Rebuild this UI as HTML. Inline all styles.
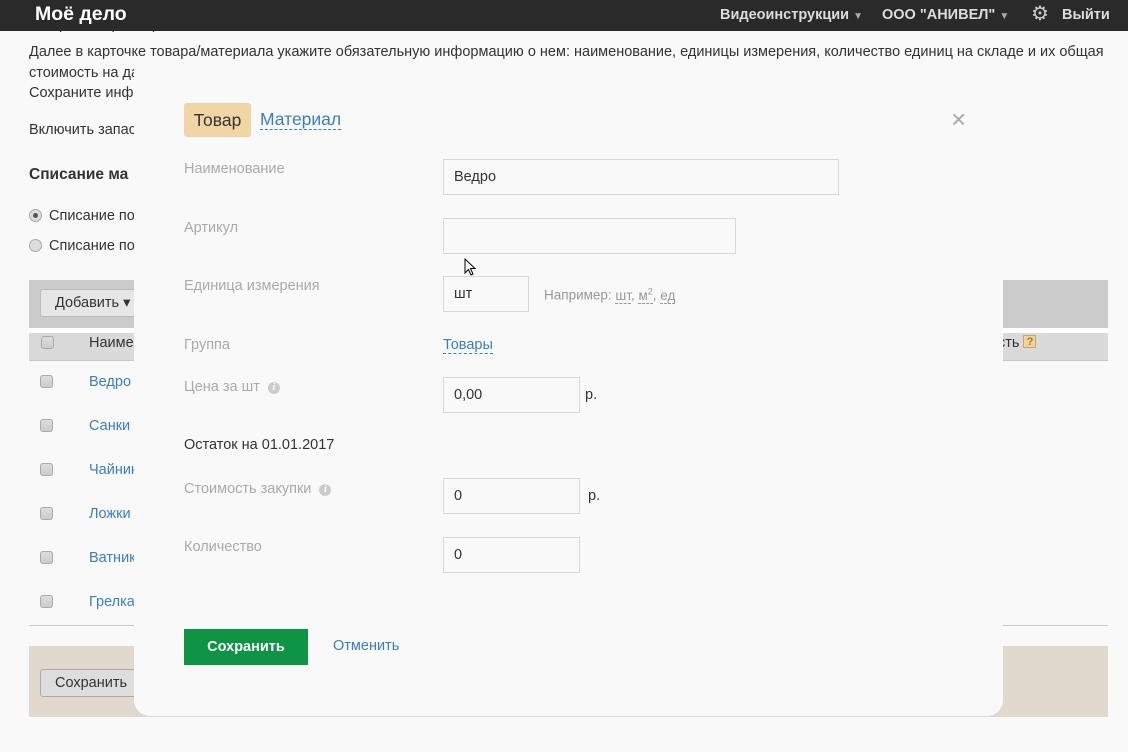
<!DOCTYPE html>
<html><head><meta charset="utf-8"><style>
*{margin:0;padding:0;box-sizing:border-box}
body{width:1128px;height:752px;overflow:hidden;background:#f9f9f9;font-family:"Liberation Sans",Arial,sans-serif;font-size:14.5px;color:#333;position:relative}
.a{position:absolute;white-space:nowrap}
.top{position:absolute;left:0;top:0;width:1128px;height:31px;background:#2a2a2a;z-index:5}
.top .r{color:#ddd;font-weight:bold;font-size:14.5px}
.lnk{color:#3a7ec2}
.cb{position:absolute;width:13px;height:13px;border:1px solid #aaa;border-radius:3px;background:linear-gradient(#ddd,#ccc)}
.lbl{position:absolute;color:#aaa;font-size:14.5px}
.inp{position:absolute;border:1px solid #d8d8d8;background:#f9f9f9;height:36px;padding-left:10px;line-height:34px;color:#333}
.dash{border-bottom:1px dashed #3a7ec2}
.info{display:inline-block;width:12px;height:12px;border-radius:50%;background:#ccc;color:#fff;font-size:10px;font-weight:bold;text-align:center;line-height:12px;font-style:italic;font-family:"Liberation Serif",serif;vertical-align:1px;margin-left:8px}
</style></head><body>
<div class="top">
<div class="a" style="left:35px;top:3px;color:#fff;font-weight:bold;font-size:19.5px">Моё дело</div>
<div class="a r" style="left:720px;top:7px">Видеоинструкции <span style="font-size:10px;color:#aaa">▼</span></div>
<div class="a r" style="left:882px;top:7px">ООО "АНИВЕЛ" <span style="font-size:10px;color:#aaa">▼</span></div>
<div class="a" style="left:1031px;top:4px;color:#ccc;font-size:20px;line-height:20px">⚙</div>
<div class="a r" style="left:1062px;top:7px">Выйти</div>
</div>
<div class="a" style="left:29px;top:17px">товара/материала).</div>
<div class="a" style="left:29px;top:44px">Далее в карточке товара/материала укажите обязательную информацию о нем: наименование, единицы измерения, количество единиц на складе и их общая</div>
<div class="a" style="left:29px;top:65px">стоимость на дат</div>
<div class="a" style="left:29px;top:85px">Сохраните инф</div>
<div class="a" style="left:29px;top:122px">Включить запас</div>
<div class="a" style="left:29px;top:166px;font-weight:bold;font-size:15.5px">Списание ма</div>
<div class="a" style="left:29px;top:209px;width:13px;height:13px;border-radius:50%;border:1px solid #aaa;background:#ddd"><div style="width:5px;height:5px;border-radius:50%;background:#555;margin:3px"></div></div>
<div class="a" style="left:49px;top:208px">Списание по</div>
<div class="a" style="left:29px;top:239px;width:13px;height:13px;border-radius:50%;border:1px solid #aaa;background:#ddd"></div>
<div class="a" style="left:49px;top:238px">Списание по</div>
<div class="a" style="left:29px;top:280px;width:1079px;height:48px;background:#cbcbcb"></div>
<div class="a" style="left:29px;top:328px;width:1079px;height:5px;background:#fff"></div>
<div class="a" style="left:29px;top:333px;width:1079px;height:28px;background:#dadada;border-bottom:1px solid #c8c8c8"></div>
<div class="a" style="left:40px;top:289px;width:110px;height:28px;border:1px solid #bbb;border-radius:3px;background:#e6e6e6;padding:5px 14px">Добавить ▾</div>
<div class="cb" style="left:41px;top:336px"></div>
<div class="a" style="left:89px;top:335px">Наиме</div>
<div class="a" style="left:998px;top:335px">сть <span style="display:inline-block;width:13px;height:13px;background:#f0d39c;border:1px solid #c9a870;font-size:11px;font-weight:bold;color:#a07830;text-align:center;line-height:12px;vertical-align:2px">?</span></div>
<div class="cb" style="left:40px;top:375px"></div><div class="a lnk" style="left:89px;top:374px">Ведро</div>
<div class="cb" style="left:40px;top:419px"></div><div class="a lnk" style="left:89px;top:418px">Санки</div>
<div class="cb" style="left:40px;top:463px"></div><div class="a lnk" style="left:89px;top:462px">Чайник</div>
<div class="cb" style="left:40px;top:507px"></div><div class="a lnk" style="left:89px;top:506px">Ложки</div>
<div class="cb" style="left:40px;top:551px"></div><div class="a lnk" style="left:89px;top:550px">Ватник</div>
<div class="cb" style="left:40px;top:595px"></div><div class="a lnk" style="left:89px;top:594px">Грелка</div>
<div class="a" style="left:29px;top:625px;width:1079px;height:1px;background:#c8c8c8"></div>
<div class="a" style="left:29px;top:646px;width:1079px;height:71px;background:#e1d9ce"></div>
<div class="a" style="left:40px;top:669px;width:110px;height:28px;border:1px solid #aaa;border-radius:3px;background:#ddd;padding:5px 14px">Сохранить</div>

<div class="a" style="left:134px;top:62px;width:869px;height:654px;background:#f9f9f9;border-radius:0 0 16px 16px"></div>
<div class="a" style="left:184px;top:103px;width:67px;height:34px;background:#f1d5a5;border-radius:3px;font-size:17.5px;line-height:34px;text-align:center;color:#333">Товар</div>
<div class="a lnk" style="left:260px;top:109px;font-size:17.5px"><span class="dash">Материал</span></div>
<div class="a" style="left:951px;top:104px;color:#aaa;font-size:26px;font-weight:300">×</div>

<div class="lbl" style="left:184px;top:161px">Наименование</div>
<div class="inp" style="left:443px;top:159px;width:396px">Ведро</div>
<div class="lbl" style="left:184px;top:220px">Артикул</div>
<div class="inp" style="left:443px;top:218px;width:293px"></div>
<div class="lbl" style="left:184px;top:278px">Единица измерения</div>
<div class="inp" style="left:443px;top:276px;width:86px">шт</div>
<div class="a" style="left:544px;top:286px;color:#999;font-size:13.5px">Например: <span style="border-bottom:1px dashed #999">шт</span>, <span style="border-bottom:1px dashed #999">м<sup style="font-size:9px">2</sup></span>, <span style="border-bottom:1px dashed #999">ед</span></div>
<div class="lbl" style="left:184px;top:337px">Группа</div>
<div class="a lnk" style="left:443px;top:337px"><span class="dash">Товары</span></div>
<div class="lbl" style="left:184px;top:379px">Цена за шт<span class="info">i</span></div>
<div class="inp" style="left:443px;top:377px;width:137px">0,00</div>
<div class="a" style="left:585px;top:387px">р.</div>
<div class="a" style="left:184px;top:437px">Остаток на 01.01.2017</div>
<div class="lbl" style="left:184px;top:481px">Стоимость закупки<span class="info">i</span></div>
<div class="inp" style="left:443px;top:478px;width:137px">0</div>
<div class="a" style="left:588px;top:488px">р.</div>
<div class="lbl" style="left:184px;top:539px">Количество</div>
<div class="inp" style="left:443px;top:537px;width:137px">0</div>
<div class="a" style="left:184px;top:629px;width:124px;height:36px;background:#0d9444;color:#fff;font-weight:bold;text-align:center;line-height:36px">Сохранить</div>
<div class="a lnk" style="left:333px;top:638px">Отменить</div>
<svg class="a" style="left:464px;top:258px" width="14" height="20" viewBox="0 0 14 20"><path d="M1 1 L1 15 L4.5 11.5 L7 17 L9 16 L6.5 10.5 L11 10.5 Z" fill="#fff" stroke="#000" stroke-width="1"/></svg>
</body></html>
